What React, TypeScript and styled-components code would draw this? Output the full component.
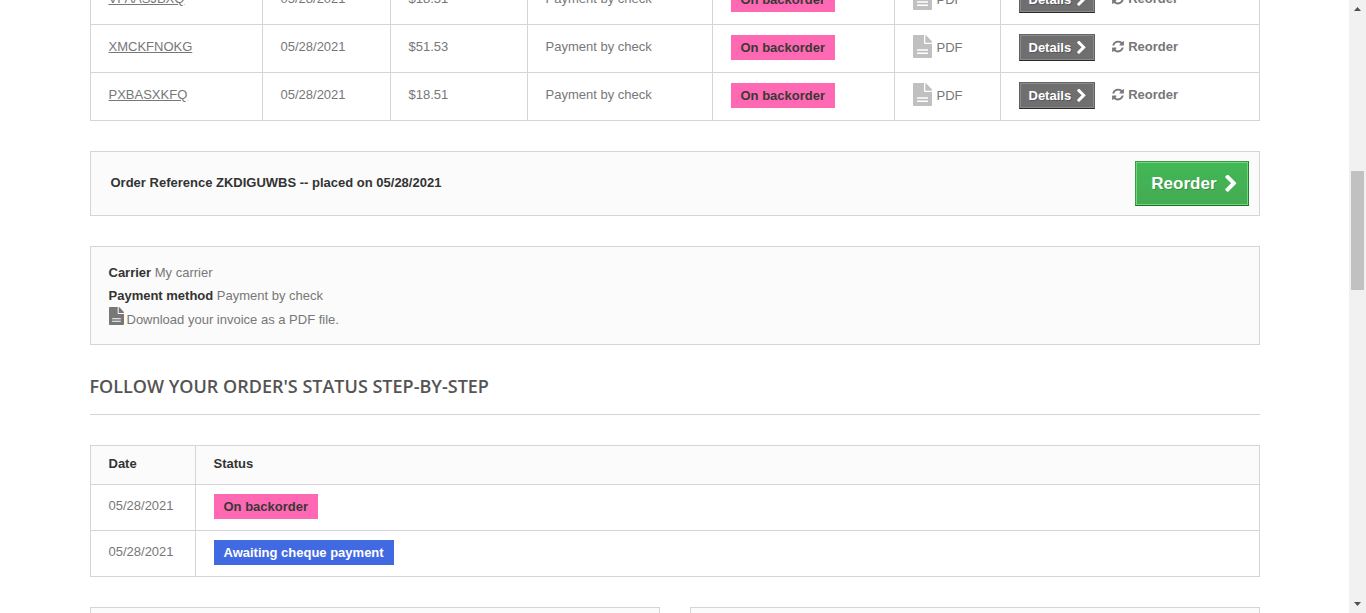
import React from 'react';
import styled, { createGlobalStyle } from 'styled-components';

const GlobalStyle = createGlobalStyle`
  *, *::before, *::after { box-sizing: border-box; }
  body {
    margin: 0;
    background: #fff;
    color: #777;
    font: 13px/23px "Liberation Sans", Arial, Helvetica, sans-serif;
  }
`;

const Shell = styled.div`
  display: flex;
  height: 100vh;
  overflow: hidden;
`;

const Page = styled.main`
  flex: 1;
  min-width: 0;
`;

const Container = styled.div`
  max-width: 1170px;
  margin: -24px auto 0;
  display: flex;
  flex-direction: column;
  gap: 30px;
`;

const Table = styled.table`
  width: 100%;
  table-layout: fixed;
  border-collapse: collapse;
`;

const Column = styled.col<{ $width?: number }>`
  width: ${({ $width }) => ($width ? `${$width}px` : 'auto')};
`;

const Cell = styled.td<{ $lowered?: boolean }>`
  border: 1px solid #d6d4d4;
  padding: ${({ $lowered }) => ($lowered ? '10px' : '9px')} 8px ${({ $lowered }) => ($lowered ? '10px' : '11px')} 18px;
  vertical-align: top;
`;

const HeadCell = styled.th`
  border: 1px solid #d6d4d4;
  padding: 9px 8px 11px 18px;
  background: #fbfbfb;
  color: #333;
  line-height: 18px;
  text-align: left;
`;

const ReferenceLink = styled.a`
  color: #777;
  text-decoration: underline;
`;

const PlainLink = styled.a`
  display: flex;
  align-items: center;
  gap: 4px;
  color: #777;
  text-decoration: none;
`;

const ReorderLink = styled(PlainLink)`
  padding-top: 1px;
  font-weight: bold;
`;

const PdfLink = styled(PlainLink)`
  align-items: flex-start;
  gap: 5px;
  line-height: 26px;
`;

const Badge = styled.span<{ $tone: 'pink' | 'blue' }>`
  display: block;
  width: fit-content;
  padding: 0 10px;
  background: ${({ $tone }) => ($tone === 'pink' ? '#ff69b4' : '#4169e1')};
  color: ${({ $tone }) => ($tone === 'pink' ? '#383838' : '#fff')};
  font-weight: bold;
  line-height: 25px;
`;

const Actions = styled.div`
  display: flex;
  align-items: flex-start;
  gap: 17px;
`;

const SmallButton = styled.button`
  display: flex;
  align-items: center;
  gap: 6px;
  height: 27px;
  padding: 0 8px 0 9px;
  border: 1px solid;
  border-color: #666 #5f5f5f #292929 #5f5f5f;
  background: #6f6f6f;
  box-shadow: inset 0 0 0 1px #8b8a8a;
  color: #fff;
  font: bold 13px/17px "Liberation Sans", Arial, sans-serif;
  text-shadow: 1px 1px rgba(0, 0, 0, 0.24);
  cursor: pointer;
`;

const LargeButton = styled.button`
  display: flex;
  align-items: center;
  gap: 8px;
  height: 45px;
  padding: 0 11px 0 15px;
  border: 1px solid;
  border-color: #399a49 #247f32 #1a6d27 #399a49;
  background: linear-gradient(#43b754, #41b757 2%, #41b854 4%, #43b756 6%, #41b354 38%, #44b355 44%, #45ae54 67%, #42ac52);
  box-shadow: inset 0 0 0 1px #74d578;
  color: #fff;
  font: bold 17px/21px "Liberation Sans", Arial, sans-serif;
  text-shadow: 1px 1px rgba(0, 0, 0, 0.2);
  cursor: pointer;
`;

const Box = styled.section`
  border: 1px solid #d6d4d4;
  background: #fbfbfb;
`;

const ReorderBox = styled(Box)`
  display: flex;
  align-items: flex-start;
  justify-content: space-between;
  padding: 9px 10px 9px 20px;
`;

const OrderTitle = styled.p`
  margin: 10px 0 0;
  color: #333;
  font-weight: bold;
`;

const InfoBox = styled(Box)`
  padding: 14px 18px 13px;

  p { margin: 0; }
  strong { color: #333; }
`;

const InvoiceLine = styled.p`
  display: flex;
  align-items: flex-start;
  gap: 3px;

  a { padding-top: 1px; }
`;

const Heading = styled.h1`
  margin: 0;
  padding-bottom: 17px;
  border-bottom: 1px solid #d6d4d4;
  color: #555454;
  font: 600 18px/22px "Open Sans", sans-serif;
  text-transform: uppercase;
`;

const AddressGrid = styled.div`
  display: grid;
  grid-template-columns: 1fr 1fr;
  gap: 30px;
`;

const AddressBox = styled(Box)`
  min-height: 200px;
`;

const Scrollbar = styled.div`
  display: flex;
  flex-direction: column;
  width: 17px;
  background: #f1f1f1;
`;

const ScrollArrow = styled.svg`
  width: 17px;
  height: 17px;
  flex: none;
`;

const Track = styled.div<{ $share: number }>`
  flex: ${({ $share }) => $share} 0 0;
`;

const Thumb = styled(Track)`
  margin: 0 2px;
  background: #c1c1c1;
`;

const Chevron = ({ width, height }: { width: number; height: number }) => (
  <svg width={width} height={height} viewBox="346 70 1080 1580" fill="currentColor" aria-hidden="true">
    <path d="M1363 877l-742 742q-19 19-45 19t-45-19l-166-166q-19-19-19-45t19-45l531-531-531-531q-19-19-19-45t19-45l166-166q19-19 45-19t45 19l742 742q19 19 19 45t-19 45z" />
  </svg>
);

const Refresh = () => (
  <svg width="12" height="13" viewBox="110 60 1570 1670" fill="currentColor" aria-hidden="true">
    <path d="M1639 1056q0 5-1 7-64 268-268 434.500t-478 166.500q-146 0-282.500-55t-243.500-157l-129 129q-19 19-45 19t-45-19-19-45v-448q0-26 19-45t45-19h448q26 0 45 19t19 45-19 45l-137 137q71 66 161 102t187 36q134 0 250-65t186-179q11-17 53-117 8-23 30-23h192q13 0 22.500 9.500t9.500 22.500zm25-800v448q0 26-19 45t-45 19h-448q-26 0-45-19t-19-45 19-45l138-138q-148-137-349-137-134 0-250 65t-186 179q-11 17-53 117-8 23-30 23h-199q-13 0-22.500-9.500t-9.500-22.500v-7q65-268 270-434.500t480-166.500q146 0 284 55.500t245 156.500l130-129q19-19 45-19t45 19 19 45z" />
  </svg>
);

const FileIcon = ({ width, height, color }: { width: number; height: number; color: string }) => (
  <svg width={width} height={height} viewBox="0 0 19 23" preserveAspectRatio="none" fill={color} aria-hidden="true">
    <path
      fillRule="evenodd"
      d="M1 0H11V8Q11 9 12 9H19V22Q19 23 18 23H1Q0 23 0 22V1Q0 0 1 0ZM4 14.300H15V15.700H4ZM4 17.500H15V19H4Z"
    />
    <path d="M12.300 0Q13 .2 13.500 .7L18.200 5.600Q19 6.500 19 7.800H12.300Z" />
  </svg>
);

const orders = [
  { reference: 'VFAASJBXQ', total: '$18.51' },
  { reference: 'XMCKFNOKG', total: '$51.53' },
  { reference: 'PXBASXKFQ', total: '$18.51' },
];

const orderColumns = [172, 128, 137, 185, 182, 106];

export default function App() {
  return (
    <>
      <GlobalStyle />
      <Shell>
        <Page>
          <Container>
            <Table aria-label="Order history">
              <colgroup>
                {orderColumns.map((width, index) => (
                  <Column key={index} $width={width} />
                ))}
                <Column />
              </colgroup>
              <tbody>
                {orders.map((order) => (
                  <tr key={order.reference}>
                    <Cell $lowered>
                      <ReferenceLink href="#order">{order.reference}</ReferenceLink>
                    </Cell>
                    <Cell $lowered>05/28/2021</Cell>
                    <Cell $lowered>{order.total}</Cell>
                    <Cell $lowered>Payment by check</Cell>
                    <Cell $lowered>
                      <Badge $tone="pink">On backorder</Badge>
                    </Cell>
                    <Cell $lowered>
                      <PdfLink href="#invoice">
                        <FileIcon width={19} height={23} color="#c0c0c0" />
                        PDF
                      </PdfLink>
                    </Cell>
                    <Cell>
                      <Actions>
                        <SmallButton type="button">
                          Details
                          <Chevron width={9} height={13} />
                        </SmallButton>
                        <ReorderLink href="#reorder">
                          <Refresh />
                          Reorder
                        </ReorderLink>
                      </Actions>
                    </Cell>
                  </tr>
                ))}
              </tbody>
            </Table>

            <ReorderBox>
              <OrderTitle>Order Reference ZKDIGUWBS -- placed on 05/28/2021</OrderTitle>
              <LargeButton type="button">
                Reorder
                <Chevron width={12} height={17} />
              </LargeButton>
            </ReorderBox>

            <InfoBox>
              <p>
                <strong>Carrier</strong> My carrier
              </p>
              <p>
                <strong>Payment method</strong> Payment by check
              </p>
              <InvoiceLine>
                <FileIcon width={15} height={18} color="#777" />
                <PlainLink href="#invoice">Download your invoice as a PDF file.</PlainLink>
              </InvoiceLine>
            </InfoBox>

            <Heading>Follow your order's status step-by-step</Heading>

            <Table>
              <colgroup>
                <Column $width={105} />
                <Column />
              </colgroup>
              <thead>
                <tr>
                  <HeadCell scope="col">Date</HeadCell>
                  <HeadCell scope="col">Status</HeadCell>
                </tr>
              </thead>
              <tbody>
                <tr>
                  <Cell>05/28/2021</Cell>
                  <Cell>
                    <Badge $tone="pink">On backorder</Badge>
                  </Cell>
                </tr>
                <tr>
                  <Cell>05/28/2021</Cell>
                  <Cell>
                    <Badge $tone="blue">Awaiting cheque payment</Badge>
                  </Cell>
                </tr>
              </tbody>
            </Table>

            <AddressGrid>
              <AddressBox />
              <AddressBox />
            </AddressGrid>
          </Container>
        </Page>

        <Scrollbar aria-hidden="true">
          <ScrollArrow viewBox="0 0 17 17">
            <path d="M5 11L8.500 7L12 11Z" fill="#505050" />
          </ScrollArrow>
          <Track $share={154} />
          <Thumb $share={119} />
          <Track $share={306} />
          <ScrollArrow viewBox="0 0 17 17">
            <path d="M5 6L8.500 10L12 6Z" fill="#505050" />
          </ScrollArrow>
        </Scrollbar>
      </Shell>
    </>
  );
}
